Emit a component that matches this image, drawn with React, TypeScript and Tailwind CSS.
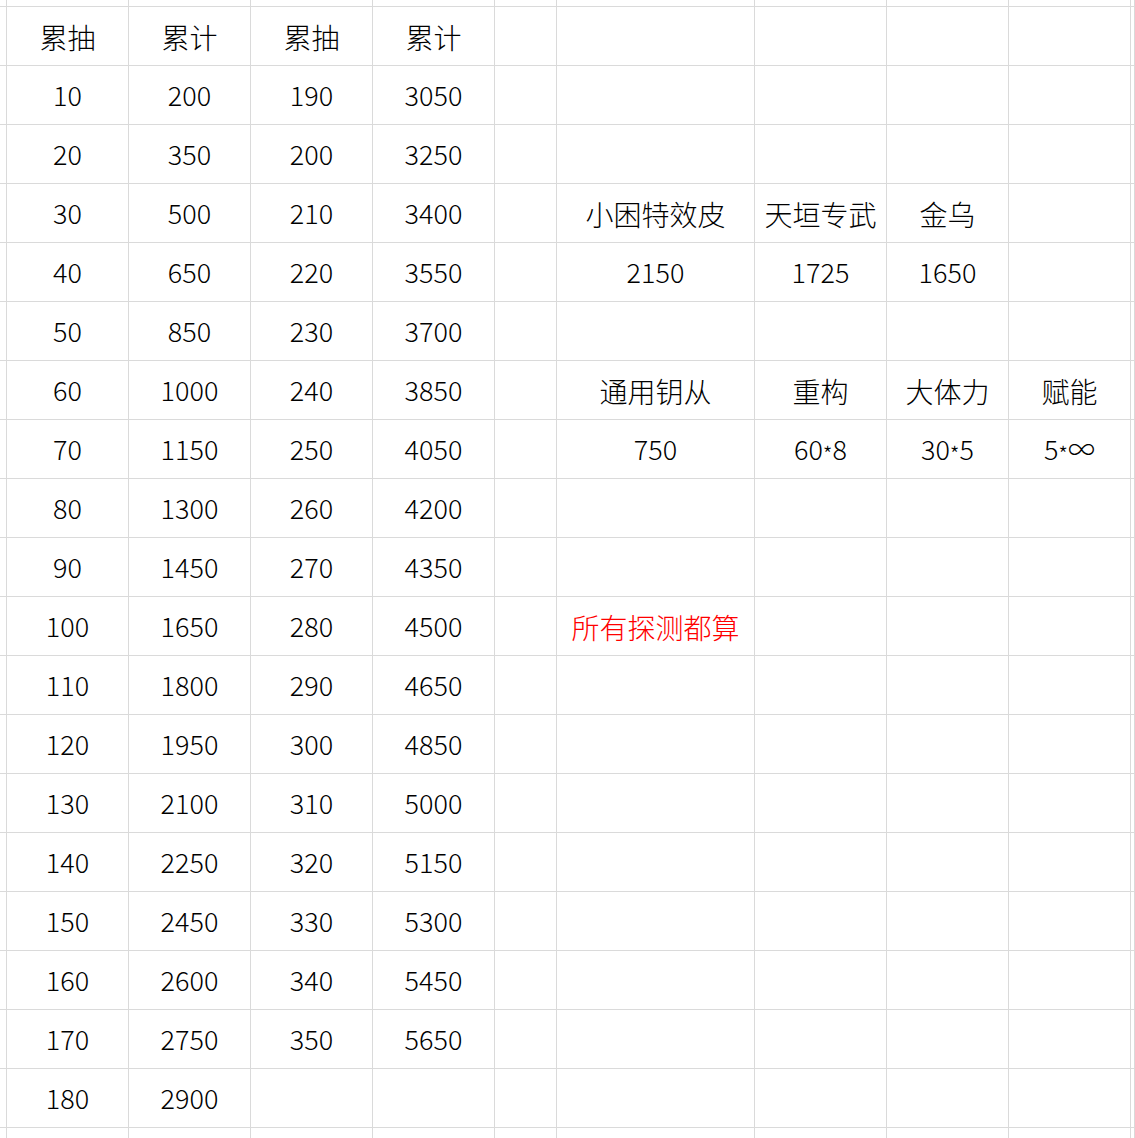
import React from 'react';

type Cell = { t: string; red?: boolean };

const numsA = Array.from({ length: 18 }, (_, i) => String((i + 1) * 10));
const numsB = ['200', '350', '500', '650', '850', '1000', '1150', '1300', '1450', '1650', '1800', '1950', '2100', '2250', '2450', '2600', '2750', '2900'];
const numsC = Array.from({ length: 17 }, (_, i) => String(190 + i * 10));
const numsD = ['3050', '3250', '3400', '3550', '3700', '3850', '4050', '4200', '4350', '4500', '4650', '4850', '5000', '5150', '5300', '5450', '5650'];

// 9 real columns: A B C D E(narrow) F G H I
const rows: (Cell | null)[][] = Array.from({ length: 20 }, () => Array(9).fill(null));

rows[0][0] = { t: '累抽' };
rows[0][1] = { t: '累计' };
rows[0][2] = { t: '累抽' };
rows[0][3] = { t: '累计' };
numsA.forEach((v, i) => (rows[i + 1][0] = { t: v }));
numsB.forEach((v, i) => (rows[i + 1][1] = { t: v }));
numsC.forEach((v, i) => (rows[i + 1][2] = { t: v }));
numsD.forEach((v, i) => (rows[i + 1][3] = { t: v }));

rows[3][5] = { t: '小困特效皮' };
rows[3][6] = { t: '天垣专武' };
rows[3][7] = { t: '金乌' };
rows[4][5] = { t: '2150' };
rows[4][6] = { t: '1725' };
rows[4][7] = { t: '1650' };

rows[6][5] = { t: '通用钥从' };
rows[6][6] = { t: '重构' };
rows[6][7] = { t: '大体力' };
rows[6][8] = { t: '赋能' };
rows[7][5] = { t: '750' };
rows[7][6] = { t: '60*8' };
rows[7][7] = { t: '30*5' };
rows[7][8] = { t: '5*∞' };

rows[10][5] = { t: '所有探测都算', red: true };

const isNum = (s: string) => /^[0-9*∞]+$/.test(s);

const line = 'border-r border-b border-[#dadada]';

// the sheet font draws "*" small and centred, so drop it a little
const renderText = (s: string) => {
  if (!s.includes('*')) return s;
  const [a, b] = s.split('*');
  return (
    <>
      {a}
      <span className="relative top-[4px] text-[22px]">*</span>
      {b}
    </>
  );
};

const App = () => {
  return (
    <div
      className="w-[1135px] h-[1138px] overflow-hidden bg-white"
      style={{ fontFamily: '"Noto Sans CJK SC", "Noto Sans", sans-serif' }}
    >
      <div className="grid grid-cols-[7px_122px_122px_122px_122px_62px_198px_132px_122px_122px_1fr] grid-rows-[7px_repeat(20,59px)]">
        {/* top partial row */}
        {Array.from({ length: 11 }).map((_, i) => (
          <div key={'top' + i} className={line} />
        ))}
        {rows.map((r, ri) => (
          <React.Fragment key={ri}>
            <div className={line} />
            {r.map((c, ci) => (
              <div
                key={ci}
                className={`${line} flex items-center justify-center pt-[1px] font-light whitespace-nowrap ${
                  c && isNum(c.t) ? 'text-[27px]' : 'text-[28px]'
                } ${c?.red ? 'text-[#ff0000]' : 'text-black'}`}
              >
                {c ? renderText(c.t) : null}
              </div>
            ))}
            <div className={line} />
          </React.Fragment>
        ))}
      </div>
    </div>
  );
};

export default App;
